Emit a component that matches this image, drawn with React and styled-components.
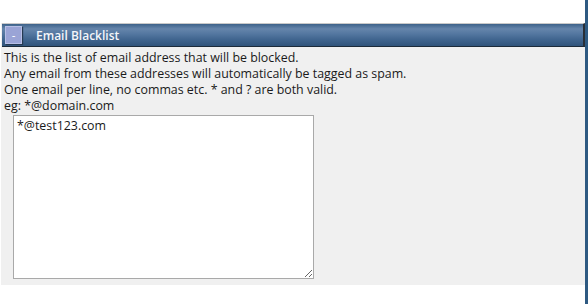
import React from "react";
import styled, { createGlobalStyle } from "styled-components";

const GlobalStyle = createGlobalStyle`
    html, body {
        margin:0;
        padding:0;
        background:#ffffff;
    }
    body {
        font-family:"Open Sans", "Liberation Sans", sans-serif;
    }
`

const Page = styled.div`
    display:flex;
    width:588px;
    height:304px;
    box-sizing:border-box;
    border-right:3px solid #2e5a82;
`

const Main = styled.div`
    flex:1;
    padding:23px 0 0 1px;
`

const Box = styled.div`
    width:584px;
    background:#f0f0f0;
`

const Bar = styled.div`
    display:flex;
    align-items:center;
    gap:14px;
    height:24px;
    margin-left:1px;
    padding-left:3px;
    box-sizing:border-box;
    border-top:1px solid #c9c9c9;
    border-bottom:1px solid #1c2b3a;
    border-right:2px solid #2a2f36;
    background:linear-gradient(to bottom, #3d628a 0%, #6585ab 22%, #5477a0 45%, #40658f 70%, #30547b 100%);
`

const ToggleButton = styled.div`
    display:flex;
    align-items:center;
    justify-content:center;
    width:15px;
    height:16px;
    background:#9aa4d6;
    border:1px solid #b7bfe6;
    box-shadow:1px 1px 1px #253a52;
    color:#ffffff;
    font-family:"Liberation Sans", Arial, sans-serif;
    font-size:11px;
    line-height:1;
`

const BarTitle = styled.span`
    color:#f4f6fa;
    font-family:"Open Sans", "Liberation Sans", sans-serif;
    font-size:12px;
    font-weight:600;
`

const Content = styled.div`
    padding:3px 0 6px 3px;
`

const Line = styled.p`
    margin:0;
    font-family:"Open Sans", "Liberation Sans", sans-serif;
    font-size:12.4px;
    line-height:16px;
    color:#1a1a1a;
`

const ListInput = styled.textarea`
    display:block;
    width:301px;
    height:164px;
    margin:1px 0 0 9px;
    padding:2px 3px;
    box-sizing:border-box;
    border:1px solid #a9a9a9;
    background:#ffffff;
    font-family:"Open Sans", "Liberation Sans", sans-serif;
    font-size:12.4px;
    line-height:16px;
    color:#1a1a1a;
    resize:both;
    outline:none;
`

function App() {
    return (
        <Page>
            <GlobalStyle />
            <Main>
                <Box>
                    <Bar>
                        <ToggleButton>-</ToggleButton>
                        <BarTitle>Email Blacklist</BarTitle>
                    </Bar>
                    <Content>
                        <Line>This is the list of email address that will be blocked.</Line>
                        <Line>Any email from these addresses will automatically be tagged as spam.</Line>
                        <Line>One email per line, no commas etc. * and ? are both valid.</Line>
                        <Line>eg: *@domain.com</Line>
                        <ListInput defaultValue="*@test123.com" spellCheck={false} />
                    </Content>
                </Box>
            </Main>
        </Page>
    )
}

export default App;
